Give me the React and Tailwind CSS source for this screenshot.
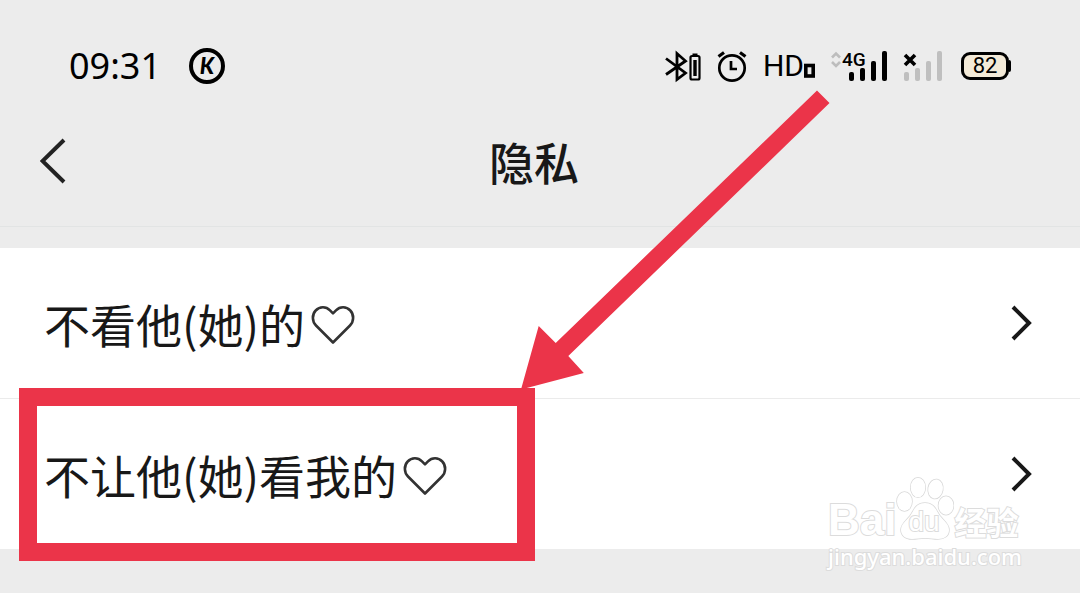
import React from 'react';

const rows = [
  { id: 'hide-theirs', label: '不看他(她)的' },
  { id: 'hide-mine', label: '不让他(她)看我的' },
];

function BluetoothIcon() {
  return (
    <svg width="36" height="36" viewBox="0 0 36 36" fill="none" stroke="black" strokeWidth="2.8" aria-hidden="true">
      <path d="M1 10.500 20.500 25 12 31.500V5.500l8.500 7.500L1 26.500" />
      <rect x="25.500" y="8" width="9" height="23.500" rx="1.500" strokeWidth="2.2" />
      <path d="M30 12v16" strokeWidth="3.4" />
      <path d="M27.500 6.500h5" strokeWidth="2" />
    </svg>
  );
}

function AlarmIcon() {
  return (
    <svg width="30" height="36" viewBox="0 0 30 36" fill="none" stroke="black" strokeWidth="2.7" aria-hidden="true">
      <circle cx="15" cy="20" r="12.7" />
      <path d="M1.500 8.500 7 4.500M28.500 8.500 23 4.500" strokeWidth="3.2" />
      <path d="M14 13v8h6" />
    </svg>
  );
}

function HdIcon() {
  return (
    <div className="flex items-center">
      <span className="text-[30px] leading-9">HD</span>
      <svg width="11" height="36" viewBox="0 0 11 36" fill="none" aria-hidden="true">
        <rect x="1.800" y="17.500" width="7.400" height="10.500" stroke="black" strokeWidth="3.6" />
      </svg>
    </div>
  );
}

function SignalBars({ color }) {
  return (
    <g fill={color}>
      <rect x="0" y="24" width="5" height="9" rx="2" />
      <rect x="11" y="20" width="5" height="13" rx="2" />
      <rect x="22" y="13" width="5" height="20" rx="2" />
      <rect x="33" y="3" width="5" height="30" rx="2" />
    </g>
  );
}

function MobileSignal() {
  return (
    <div className="relative">
      <svg width="56" height="36" viewBox="0 0 56 36" fill="none" aria-hidden="true">
        <path d="m1 9.500 4-4 4 4M1 14l4 4 4-4" stroke="#bdbdbd" strokeWidth="2.6" />
        <g transform="translate(18 0)">
          <SignalBars color="black" />
        </g>
      </svg>
      <span className="absolute left-[11px] top-0 text-[19px] font-medium leading-6">4G</span>
    </div>
  );
}

function NoSignal() {
  return (
    <svg width="42" height="36" viewBox="0 0 42 36" fill="none" aria-hidden="true">
      <g transform="translate(1 0)">
        <SignalBars color="#bfbfbf" />
      </g>
      <path d="m2 7 10 10M12 7 2 17" stroke="black" strokeWidth="3.6" />
    </svg>
  );
}

function Battery({ level }) {
  return (
    <div className="flex items-center">
      <div className="flex h-7 w-12 items-center justify-center rounded-[9px] border-3 border-black bg-[#f3ead8] font-['Roboto',sans-serif] text-[22px] leading-none">
        {level}
      </div>
      <div className="h-3 w-0.5 rounded-r-sm bg-black" />
    </div>
  );
}

function StatusBar() {
  return (
    <div className="flex items-center justify-between pb-2 pl-[69px] pr-[69px] pt-10 text-black">
      <div className="flex items-center gap-7">
        <span className="font-['Noto_Sans',sans-serif] text-[36px] leading-[52px]">09:31</span>
        <span className="flex size-9 items-center justify-center rounded-full border-4 border-black font-['Lato',sans-serif] text-[22px] font-black italic leading-none">
          K
        </span>
      </div>
      <div className="flex items-center gap-4 font-['Roboto',sans-serif]">
        <BluetoothIcon />
        <AlarmIcon />
        <HdIcon />
        <MobileSignal />
        <NoSignal />
        <Battery level={82} />
      </div>
    </div>
  );
}

function TitleBar() {
  return (
    <header className="grid grid-cols-[1fr_auto_1fr] items-center border-b border-[#e2e4e4] pb-[34px] pl-10 pr-[52px] pt-8">
      <button type="button" aria-label="返回" className="justify-self-start">
        <svg width="28" height="48" viewBox="0 0 28 48" fill="none" stroke="#222" strokeWidth="4" aria-hidden="true">
          <path d="M24 2 2.500 23 24 44" />
        </svg>
      </button>
      <h1 className="text-[45px] font-medium leading-[60px]">隐私</h1>
    </header>
  );
}

function HeartIcon() {
  return (
    <svg width="44" height="44" viewBox="0 -4 44 44" fill="none" stroke="#333" strokeWidth="2.6" strokeLinejoin="round" aria-hidden="true">
      <path d="M22 37.500 5 20.500C1 16.500 .8 9.500 4.700 5.500c4-4.200 10.300-4.200 14.300-.2l3 3 3-3c4-4 10.300-4 14.300.2 3.900 4 3.700 11-.3 15z" />
    </svg>
  );
}

function SettingRow({ label }) {
  return (
    <li className="border-b border-[#ebebeb] last:border-b-0">
      <button type="button" className="flex w-full items-center justify-between py-11 pl-11 pr-12 text-left">
        <span className="flex items-center gap-1.5 text-[46px] leading-[62px]">
          {label}
          <HeartIcon />
        </span>
        <svg width="22" height="36" viewBox="0 0 22 36" fill="none" stroke="#181818" strokeWidth="4" aria-hidden="true">
          <path d="m3 2 16 16L3 34" />
        </svg>
      </button>
    </li>
  );
}

function Highlight() {
  return (
    <div className="pointer-events-none">
      <div className="absolute left-[19px] top-[388px] h-[173px] w-[516px] border-18 border-[#eb3449]" />
      <svg className="absolute left-[521px] top-[90px]" width="309" height="300" viewBox="521 90 309 300" fill="#eb3449" aria-hidden="true">
        <path d="M817 90.500 829.500 103 568.300 356l15.500 17L521 389.500 538.700 326l17 17z" />
      </svg>
    </div>
  );
}

function Watermark() {
  return (
    <div className="pointer-events-none absolute left-[828px] top-[476px] text-white [-webkit-text-stroke:2px_#dcdcdc] [paint-order:stroke_fill]">
      <div className="flex h-[66px] items-end">
        <span className="font-['Liberation_Sans',sans-serif] text-[44px] font-bold leading-[44px]">Bai</span>
        <div className="relative h-[66px]">
          <svg width="58" height="66" viewBox="0 0 58 66" fill="white" stroke="#d8d8d8" strokeWidth="1.5" aria-hidden="true">
            <ellipse cx="8.500" cy="25.500" rx="7.500" ry="9.500" />
            <ellipse cx="22" cy="11.500" rx="7.300" ry="9.800" />
            <ellipse cx="39.500" cy="13" rx="7.300" ry="9.600" transform="rotate(10 39.500 13)" />
            <ellipse cx="50" cy="29.500" rx="7.500" ry="9.200" />
            <path d="M29 27c9 0 11 7 15 13 4 5 9 8 9 14 0 6-5 9-11 9-5 0-8-1-13-1s-8 1-13 1C9 63 5 59 5 54c0-6 5-9 9-14 4-6 6-13 15-13z" />
          </svg>
          <span className="absolute left-3 top-7 font-['Liberation_Sans',sans-serif] text-[28px] leading-9">du</span>
        </div>
        <span className="text-[32px] font-bold leading-[42px]">经验</span>
      </div>
      <div className="font-['Noto_Sans',sans-serif] text-[22px] font-medium leading-7">jingyan.baidu.com</div>
    </div>
  );
}

export default function App() {
  return (
    <div className="relative min-h-screen overflow-hidden bg-[#ececec] font-['Noto_Sans_CJK_SC',sans-serif] text-[#181818]">
      <StatusBar />
      <TitleBar />
      <ul className="mt-[21px] bg-white">
        {rows.map((row) => (
          <SettingRow key={row.id} label={row.label} />
        ))}
      </ul>
      <Watermark />
      <Highlight />
    </div>
  );
}
